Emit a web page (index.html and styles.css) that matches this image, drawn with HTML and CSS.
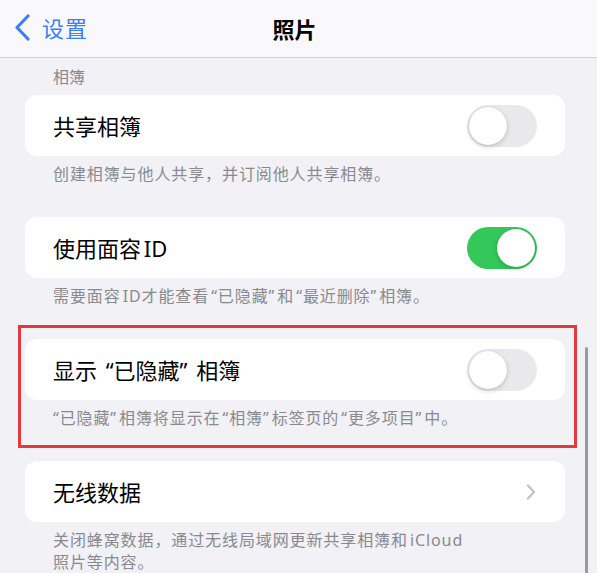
FILE: index.html
```html
<!DOCTYPE html>
<html lang="zh-CN">
<head>
<meta charset="utf-8">
<title>照片</title>
<link rel="stylesheet" href="styles.css">
</head>
<body>
<header class="nav">
  <div class="nav-back">
    <svg class="back-chevron" width="18" height="28" viewBox="0 0 18 28"><path d="M14 2 L3 13.5 L14 25" fill="none" stroke="#3a7ff6" stroke-width="3.2" stroke-linecap="round" stroke-linejoin="round"/></svg>
    <span class="back-label">设置</span>
  </div>
  <div class="nav-title">照片</div>
</header>
<main class="content">
  <div class="section-header">相簿</div>
  <section class="group">
    <div class="card">
      <span class="label">共享相簿</span>
      <span class="toggle"><span class="knob"></span></span>
    </div>
    <p class="caption">创建相簿与他人共享，并订阅他人共享相簿。</p>
  </section>
  <section class="group">
    <div class="card">
      <span class="label">使用面容 ID</span>
      <span class="toggle on"><span class="knob"></span></span>
    </div>
    <p class="caption">需要面容 ID才能查看 “已隐藏” 和 “最近删除” 相簿。</p>
  </section>
  <section class="group highlight">
    <div class="card">
      <span class="label quoted">显示 “已隐藏” 相簿</span>
      <span class="toggle"><span class="knob"></span></span>
    </div>
    <p class="caption">“已隐藏” 相簿将显示在 “相簿” 标签页的 “更多项目” 中。</p>
  </section>
  <section class="group">
    <div class="card">
      <span class="label">无线数据</span>
      <svg class="row-chevron" width="12" height="18" viewBox="0 0 12 18"><path d="M3 2.5 L9 9 L3 15.5" fill="none" stroke="#c4c4c7" stroke-width="2.4" stroke-linecap="round" stroke-linejoin="round"/></svg>
    </div>
    <p class="caption">关闭蜂窝数据，通过无线局域网更新共享相簿和 iCloud<br>照片等内容。</p>
  </section>
</main>
<div class="scrollbar"></div>
</body>
</html>
```
FILE: styles.css
```css
html, body {
  margin: 0;
  padding: 0;
}
body {
  width: 597px;
  height: 573px;
  overflow: hidden;
  background: #f1f1f6;
  font-family: "Noto Sans", "Noto Sans CJK SC", sans-serif;
  color: #000;
  position: relative;
}
.nav {
  height: 57px;
  border-bottom: 1px solid #d6d6da;
  background: #f9f9fb;
  position: relative;
  display: flex;
  align-items: center;
  justify-content: center;
}
.nav-back {
  position: absolute;
  left: 14px;
  top: 13px;
  display: flex;
  align-items: center;
  gap: 10px;
}
.back-chevron {
  display: block;
}
.back-label {
  font-size: 22px;
  line-height: 30px;
  color: #3a7ff6;
  letter-spacing: 1px;
}
.nav-title {
  font-size: 22px;
  font-weight: 700;
  line-height: 30px;
  margin-left: -8px;
}
.content {
  padding: 8px 32px 0 25px;
  display: flex;
  flex-direction: column;
}
.section-header {
  font-size: 16px;
  line-height: 22px;
  color: #8a8a8e;
  padding-left: 28px;
  margin-bottom: 7px;
}
.group {
  margin-bottom: 32px;
}
.card {
  height: 61px;
  background: #fff;
  border-radius: 12px;
  display: flex;
  align-items: center;
  justify-content: space-between;
  padding: 0 28px 0 28px;
  box-sizing: border-box;
}
.label {
  font-size: 22px;
  line-height: 30px;
  word-spacing: -3px;
}
.label.quoted {
  word-spacing: 3px;
}
.caption {
  margin: 7px 0 0 0;
  padding-left: 28px;
  font-size: 16px;
  line-height: 22px;
  color: #8a8a8e;
  letter-spacing: 0.9px;
  word-spacing: -3px;
}
.toggle {
  width: 70px;
  height: 42px;
  border-radius: 21px;
  background: #e9e9eb;
  position: relative;
  display: block;
}
.toggle .knob {
  position: absolute;
  top: 2px;
  left: 2px;
  width: 38px;
  height: 38px;
  border-radius: 50%;
  background: #fff;
  box-shadow: 0 2px 5px rgba(0,0,0,0.16), 0 0 1px rgba(0,0,0,0.2);
}
.toggle.on {
  background: #34c759;
}
.toggle.on .knob {
  left: 30px;
}
.row-chevron {
  display: block;
}
.highlight {
  position: relative;
}
.highlight::after {
  content: "";
  position: absolute;
  top: -14px;
  left: -7px;
  right: -12px;
  bottom: -19px;
  border: 3px solid #e3393f;
  pointer-events: none;
}
.scrollbar {
  position: absolute;
  left: 585px;
  top: 347px;
  width: 3px;
  height: 240px;
  border-radius: 2px;
  background: #9a9a9e;
}
```
